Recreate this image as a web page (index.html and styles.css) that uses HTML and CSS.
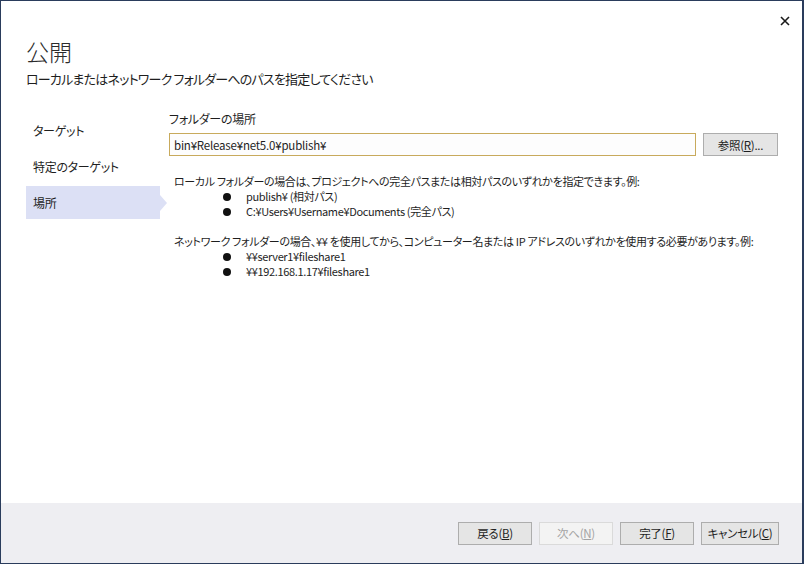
FILE: index.html
```html
<!DOCTYPE html>
<html lang="ja">
<head>
    <meta charset="UTF-8">
    <title>公開</title>
    <link rel="stylesheet" href="styles.css">
</head>
<body>
    <div class="window">
        <div class="title-bar">
            <button class="close" title="閉じる">
                <svg width="10" height="10" viewBox="0 0 10 10">
                    <path d="M1 1 L9 9 M9 1 L1 9" stroke="#1a1a1a" stroke-width="1.6" fill="none"/>
                </svg>
            </button>
        </div>
        <div class="main">
            <h1>公開</h1>
            <p class="subtitle">ローカルまたはネットワーク フォルダーへのパスを指定してください</p>
            <div class="body">
                <ul class="nav">
                    <li>ターゲット</li>
                    <li>特定のターゲット</li>
                    <li class="selected">場所</li>
                </ul>
                <div class="content">
                    <label class="field-label" for="folder">フォルダーの場所</label>
                    <div class="field-row">
                        <input type="text" id="folder" value="bin¥Release¥net5.0¥publish¥">
                        <button class="button browse">参照(<u>R</u>)...</button>
                    </div>
                    <div class="help">
                        <p>ローカル フォルダーの場合は、プロジェクトへの完全パスまたは相対パスのいずれかを指定できます。例:</p>
                        <ul>
                            <li>publish¥ (相対パス)</li>
                            <li>C:¥Users¥Username¥Documents (完全パス)</li>
                        </ul>
                        <p>ネットワーク フォルダーの場合、¥¥ を使用してから、コンピューター名または IP アドレスのいずれかを使用する必要があります。例:</p>
                        <ul>
                            <li>¥¥server1¥fileshare1</li>
                            <li>¥¥192.168.1.17¥fileshare1</li>
                        </ul>
                    </div>
                </div>
            </div>
        </div>
        <div class="footer">
            <button class="button">戻る(<u>B</u>)</button>
            <button class="button" disabled>次へ(<u>N</u>)</button>
            <button class="button">完了(<u>F</u>)</button>
            <button class="button cancel">キャンセル(<u>C</u>)</button>
        </div>
    </div>
</body>
</html>
```

FILE: styles.css
```css
body {
    margin: 0;
    font-family: "Noto Sans CJK JP", sans-serif;
    font-feature-settings: "palt";
    color: #1e1e1e;
    background: #ffffff;
}
.window {
    width: 804px;
    height: 564px;
    box-sizing: border-box;
    border: 1px solid #2a3c5c;
    border-right-width: 2px;
    display: flex;
    flex-direction: column;
    background: #ffffff;
}
.title-bar {
    height: 34px;
    display: flex;
    justify-content: flex-end;
    align-items: flex-start;
}
.close {
    margin: 14px 9px 0 0;
    width: 16px;
    height: 12px;
    padding: 0;
    border: none;
    background: none;
    display: flex;
    align-items: center;
    justify-content: center;
}
.main {
    flex: 1;
    padding: 0 0 0 25px;
}
h1 {
    margin: 0;
    font-size: 23px;
    font-weight: 300;
    line-height: 32px;
    color: #2b2b2b;
}
.subtitle {
    margin: 2px 0 0;
    font-size: 13px;
    letter-spacing: -0.8px;
    line-height: 20px;
}
.body {
    display: flex;
    margin-top: 25px;
}
.nav {
    list-style: none;
    margin: 0;
    padding: 0;
    width: 134px;
    flex-shrink: 0;
}
.nav li {
    position: relative;
    height: 33px;
    line-height: 33px;
    margin-bottom: 3px;
    padding-left: 7px;
    font-size: 12px;
    letter-spacing: -0.3px;
}
.nav li.selected {
    background: #dce0f5;
}
.nav li.selected::after {
    content: "";
    position: absolute;
    right: -7px;
    top: 9px;
    border-top: 8px solid transparent;
    border-bottom: 8px solid transparent;
    border-left: 7px solid #dce0f5;
}
.content {
    flex: 1;
    padding: 0 24px 0 9px;
    margin-top: -3px;
}
.field-label {
    display: block;
    font-size: 12px;
    letter-spacing: -0.3px;
    line-height: 16px;
}
.field-row {
    display: flex;
    gap: 7px;
    margin-top: 6px;
}
input {
    flex: 1;
    height: 23px;
    box-sizing: border-box;
    border: 1px solid #c8aa5c;
    background: #fdfdfd;
    padding: 0 4px;
    font-family: inherit;
    font-size: 11.5px;
    letter-spacing: -0.2px;
    color: #1e1e1e;
}
.button {
    height: 23px;
    min-width: 74px;
    box-sizing: border-box;
    border: 1px solid #adadad;
    background: #e5e5e5;
    font-family: inherit;
    font-feature-settings: "palt";
    font-size: 11.5px;
    letter-spacing: -0.3px;
    color: #1e1e1e;
    padding: 0 4px;
}
.button:disabled {
    background: #f3f3f3;
    border-color: #dadada;
    color: #a3a3a3;
}
.browse {
    width: 75px;
}
.cancel {
    width: 78px;
}
.help {
    margin-top: 18px;
    padding-left: 5px;
    font-size: 11px;
    letter-spacing: -0.35px;
    line-height: 15px;
}
.help p {
    margin: 0;
}
.help ul {
    list-style: none;
    margin: 0 0 15px;
    padding: 0 0 0 72px;
}
.help li {
    position: relative;
}
.help li::before {
    content: "";
    position: absolute;
    left: -23px;
    top: 4px;
    width: 8px;
    height: 8px;
    border-radius: 50%;
    background: #111111;
}
.footer {
    height: 60px;
    background: #eeeef2;
    display: flex;
    justify-content: flex-end;
    align-items: center;
    gap: 7px;
    padding-right: 23px;
}
```
